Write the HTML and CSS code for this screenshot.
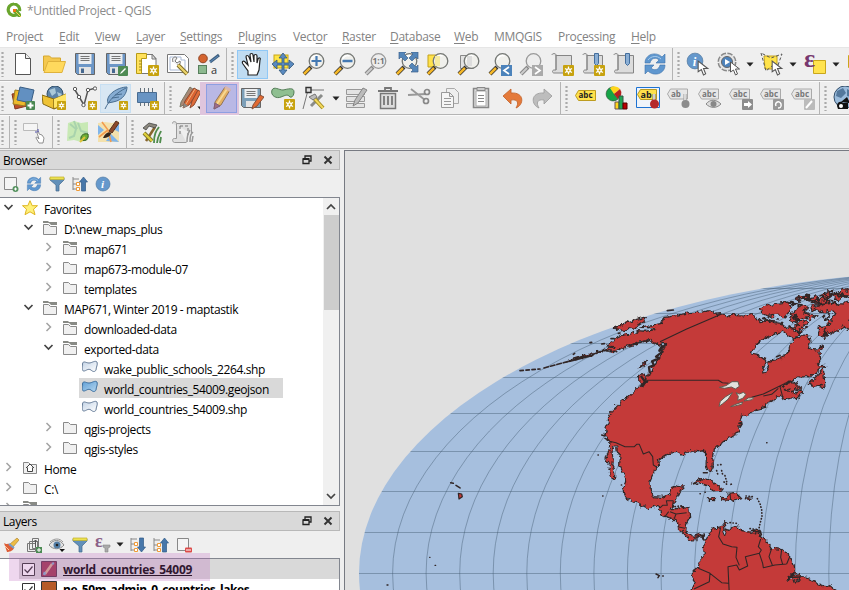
FILE: index.html
```html
<!DOCTYPE html>
<html lang="en">
<head>
<meta charset="utf-8">
<title>*Untitled Project - QGIS</title>
<link rel="stylesheet" href="styles.css">
</head>
<body>
<svg class="defs" width="0" height="0" aria-hidden="true">
<defs>
<linearGradient id="shape" x1="0" y1="0" x2="1" y2="1"><stop offset="0" stop-color="#c3d3e6"/><stop offset="1" stop-color="#fff"/></linearGradient>
<linearGradient id="shapeOn" x1="0" y1="0" x2="1" y2="1"><stop offset="0" stop-color="#5f9fd6"/><stop offset="1" stop-color="#b5d6ef"/></linearGradient>
<symbol id="spark" viewBox="0 0 11 11"><rect width="11" height="11" rx="1" fill="#c7a20e"/><path d="M5.500 1.500v8M2 3.500l7 4M9 3.500l-7 4" stroke="#fff" stroke-width="1.300"/><circle cx="5.500" cy="5.500" r="2.300" fill="#fff"/><circle cx="5.500" cy="5.500" r="1" fill="#c7a20e"/></symbol>
<symbol id="pencil" viewBox="0 0 24 24"><path d="M5 23l1-7L16 1l5 3-9 15z" fill="#e5b062" stroke="#90745a"/><path d="M8 18L18 3" stroke="#f6d891" stroke-width="2"/><path d="M5 23l1-6 5 3z" fill="#a26d85" stroke="#80607c"/><path d="M15 2l2-2 5 3-1 3z" fill="#d9b6ad"/></symbol>
<symbol id="new" viewBox="0 0 24 24"><path d="M4.500 1.500h10l5 5v16h-15z" fill="#fff" stroke="#555"/><path d="M14.500 1.500v5h5" fill="#eee" stroke="#555"/></symbol>
<symbol id="open" viewBox="0 0 24 24"><path d="M1.500 19V4h6l2 2h9v4" fill="#f4c84f" stroke="#d5a72e"/><path d="M2 20.500L6 9.500h17.500L20 20.500z" fill="#ffd95d" stroke="#dfb23c"/></symbol>
<symbol id="save" viewBox="0 0 24 24"><path d="M2.500 1.500h19v21H4.500l-2-2z" fill="#6c96c6" stroke="#666"/><path d="M5.500 2h13v10h-13z" fill="#eceef0"/><path d="M7.500 4.500h9M7.500 6.500h9M7.500 8.500h9" stroke="#777"/><path d="M6 15h12v7H6z" fill="#e3e3e3"/><path d="M8 16.500h3V21H8z" fill="#46688f"/></symbol>
<symbol id="saveas" viewBox="0 0 24 24"><use href="#save"/><rect x="14" y="14" width="10" height="10" rx="1" fill="#4e8b54"/><path d="M16 22l1-2 4-4 1 1-4 4z" fill="#fff"/></symbol>
<symbol id="layout" viewBox="0 0 24 24"><path d="M6 2.500h11l4 4v15H3" fill="#fff" stroke="#777"/><path d="M1.500 1.500h10v5h-5v15h-5z" fill="#ffe15c" stroke="#b79b16"/><path d="M4 9h3M4 12h3M4 15h3M4 18h3" stroke="#9a8421"/><path d="M17 2l4 5h-4z" fill="#ddd" stroke="#777"/><use href="#spark" x="13" y="13" width="11" height="11"/></symbol>
<symbol id="layouts" viewBox="0 0 24 24"><path d="M1.500 2.500h17l4 4v14h-21z" fill="#fff" stroke="#777"/><path d="M4 5h11v3h4v10H4z" fill="none" stroke="#a9b9d5"/><path d="M7 10c-2-5 3-6 4-4L9 9l2 2 3-2c1 3-1 4-3 4" fill="#eee" stroke="#777"/><path d="M12 13l9 9" stroke="#76631f" stroke-width="4"/><path d="M12 13l9 9" stroke="#ead36a" stroke-width="2.400"/></symbol>
<symbol id="style" viewBox="0 0 24 24"><circle cx="6" cy="6.500" r="4.300" fill="#d4642f" stroke="#914323"/><path d="M13 10l9-7" stroke="#41617f" stroke-width="3"/><path d="M13 10l8-6" stroke="#5c8cc0"/><rect x="1.500" y="13.500" width="8" height="8" fill="#8cb98f" stroke="#577f5c"/><text x="14" y="22" font-size="11" font-weight="normal" fill="#333">a</text></symbol>
<symbol id="hand" viewBox="0 0 24 24"><path d="M8 23v-4L3 12c-2-3 1-4 3-1l2 2L6 5c0-2 2-2 3 0l2 5-1-7c0-2 3-2 3 0l1 7V4c0-2 3-2 3 0v7l1-4c1-2 3-1 2 1l-1 10-2 5z" fill="#fff" stroke="#222" stroke-width="1.200"/></symbol>
<symbol id="pansel" viewBox="0 0 24 24"><rect x="3" y="3" width="14" height="13" fill="#ffe545" stroke="#c8a616"/><path d="M12 1l4 5h-3v5h5V8l5 4-5 5v-4h-5v5h3l-4 5-4-5h3v-5H6v4l-5-5 5-4v3h5V6H8z" fill="#5a8ac0" stroke="#345879" stroke-width=".8"/></symbol>
<symbol id="lens" viewBox="0 0 24 24"><path d="M2 22l7-7" stroke="#333" stroke-width="4"/><path d="M2 22l6-6" stroke="#f4b729" stroke-width="2.500"/><circle cx="14.500" cy="9" r="7.300" fill="#f0f0ec" stroke="#747774" stroke-width="1.300"/><path d="M9.500 8a5 5 0 0 1 7-4" stroke="#fff" stroke-width="1.500" fill="none"/></symbol>
<symbol id="lensgray" viewBox="0 0 24 24"><path d="M2 22l7-7" stroke="#888" stroke-width="4"/><path d="M2 22l6-6" stroke="#ccc" stroke-width="2"/><circle cx="14.500" cy="9" r="7.300" fill="#ededed" stroke="#999" stroke-width="1.300"/></symbol>
<symbol id="zin" viewBox="0 0 24 24"><use href="#lens"/><path d="M14.500 4v10M9.500 9h10" stroke="#4479b2" stroke-width="2.200"/></symbol>
<symbol id="zout" viewBox="0 0 24 24"><use href="#lens"/><path d="M9.500 9h10" stroke="#4479b2" stroke-width="2.500"/></symbol>
<symbol id="znative" viewBox="0 0 24 24"><use href="#lensgray"/><text x="8.500" y="12" font-size="8.500" font-weight="bold" fill="#777">1:1</text></symbol>
<symbol id="zfull" viewBox="0 0 24 24"><use href="#lens"/><g fill="#5586b9" stroke="#3d638c" stroke-width=".7"><path d="M4 0h7L9 2l4 4-3 3-4-4-2 2zM23 0h-7l2 2-4 4 3 3 4-4 2 2zM23 20h-7l2-2-4-4 3-3 4 4 2-2z"/></g></symbol>
<symbol id="zsel" viewBox="0 0 24 24"><path d="M2 3h12v12H2z" fill="#ffe24b" stroke="#c3a11d"/><use href="#lens"/><path d="M9 4h5v10H9z" fill="#f5eaa0"/></symbol>
<symbol id="zlayer" viewBox="0 0 24 24"><path d="M3.500 3.500h13v13h-13z" fill="#e2e2e2" stroke="#888"/><use href="#lens"/><path d="M10 4h5v10h-5z" fill="#ddd"/></symbol>
<symbol id="zlast" viewBox="0 0 24 24"><use href="#lens"/><path d="M13 13h11v11H13z" fill="#4c83bb"/><path d="M21 15l-5 3.500 5 3.500" fill="none" stroke="#fff" stroke-width="1.700"/></symbol>
<symbol id="znext" viewBox="0 0 24 24"><use href="#lensgray"/><path d="M13 13h11v11H13z" fill="#aaa"/><path d="M16 15l5 3.500-5 3.500" fill="none" stroke="#fff" stroke-width="1.700"/></symbol>
<symbol id="book" viewBox="0 0 24 24"><path d="M2 3c0-2 4-2 4 0v15H4c-2 0-2 3 0 3h17.500V3.500H6M6 18V3" fill="#dcdcdc" stroke="#858585"/></symbol>
<symbol id="booknew" viewBox="0 0 24 24"><use href="#book"/><use href="#spark" x="13" y="13" width="11" height="11"/></symbol>
<symbol id="bookmark" viewBox="0 0 24 24"><use href="#book"/><path d="M13.500 1.500h4v10l-2 2-2-2z" fill="#8aaed4" stroke="#446e9d"/></symbol>
<symbol id="bookmarknew" viewBox="0 0 24 24"><use href="#bookmark"/><use href="#spark" x="13" y="13" width="11" height="11"/></symbol>
<symbol id="refresh" viewBox="0 0 24 24"><path d="M2 11c0-9 11-12 17-6l3-3v9h-9l3-3c-3-3-8-2-9 3zM22 13c0 9-11 12-17 6l-3 3v-9h9l-3 3c3 3 8 2 9-3z" fill="#5f97cf" stroke="#3c71a9" stroke-width=".6"/><path d="M5 8c3-4 9-5 13-1" stroke="#a6caeb" fill="none"/></symbol>
<symbol id="cursor" viewBox="0 0 12 15"><path d="M1 1v10l3-2 2 5 2-1-2-5h4z" fill="#fff" stroke="#555"/></symbol>
<symbol id="info" viewBox="0 0 24 24"><circle cx="12" cy="12" r="10.500" fill="#6598cc" stroke="#5078a0"/><text x="9" y="18" font-size="17" font-style="italic" font-weight="bold" fill="#fff" font-family="Liberation Serif">i</text></symbol>
<symbol id="identify" viewBox="0 0 24 24"><use href="#info" width="18" height="18"/><use href="#cursor" x="10" y="8" width="15" height="16"/></symbol>
<symbol id="action" viewBox="0 0 24 24"><circle cx="10" cy="10" r="8" fill="#eee" stroke="#888" stroke-width="3" stroke-dasharray="5 1.300"/><circle cx="10" cy="10" r="8" fill="#e4e4e4"/><circle cx="10" cy="10" r="5.500" fill="#4e83bc" stroke="#666"/><path d="M8 7l5 3-5 3z" fill="#fff"/><use href="#cursor" x="12" y="9" width="13" height="15"/></symbol>
<symbol id="select" viewBox="0 0 24 24"><path d="M4 4h13v13H5z" fill="#ffe349" stroke="#c4a31e"/><path d="M1 1l5 18 6-5 5 2 5-14-11 4z" fill="none" stroke="#555" stroke-dasharray="3 2"/><use href="#cursor" x="10" y="8" width="15" height="16"/></symbol>
<symbol id="exprsel" viewBox="0 0 24 24"><path d="M10.500 8.500h12v13h-12z" fill="#ffe34e" stroke="#c9a61b"/><text x="1" y="15" font-size="26" font-weight="bold" fill="#77376f" font-family="Liberation Serif">ε</text></symbol>
<symbol id="yellow" viewBox="0 0 24 24"><path d="M2.500 3.500h20v12h-20z" fill="#ffe34e" stroke="#c9a61b"/></symbol>
<symbol id="datasource" viewBox="0 0 24 24"><path d="M1 8l12-2 3 14-12 3z" fill="#bf4e27" stroke="#82371f"/><path d="M4 4l12 2-2 14L2 18z" fill="#edba2b" stroke="#9a7a25"/><path d="M9 1l14 3-3 13-14-3z" fill="#6290c1" stroke="#385d84"/><rect x="15" y="15" width="9" height="9" rx="1" fill="#498751"/><path d="M19.500 16.500v6M16.500 19.500h6" stroke="#fff" stroke-width="2"/></symbol>
<symbol id="geopackage" viewBox="0 0 24 24"><circle cx="13" cy="8" r="8" fill="#5c83a8" stroke="#32506a"/><path d="M7 4l6-2 1 5-4 3zM15 6l5 2-3 4z" fill="#aac8d8"/><path d="M0 9l12 4v10L1 18zM12 13l12-5v10l-12 5z" fill="#efc335" stroke="#886c16"/><path d="M12 13l12-5v8l-12 6z" fill="#ffe567"/><use href="#spark" x="15" y="15" width="9" height="9"/></symbol>
<symbol id="shapefile" viewBox="0 0 24 24"><path d="M2 4l9 15 4-15 8-2" fill="none" stroke="#555" stroke-width="1.500"/><g fill="#fff" stroke="#555"><circle cx="2" cy="3" r="1.700"/><circle cx="6" cy="11" r="1.700"/><circle cx="10.500" cy="19" r="1.700"/><circle cx="15" cy="4" r="1.700"/><circle cx="22" cy="2.500" r="1.700"/></g><use href="#spark" x="15" y="15" width="9" height="9"/></symbol>
<symbol id="feather" viewBox="0 0 24 24"><path d="M4 17C1 9 14 1 23 1c0 5-3 13-14 15z" fill="#86acd2" stroke="#496e91"/><path d="M1 23C5 14 12 7 22 2M8 12l7-1M11 9l7-1" fill="none" stroke="#496e91"/><use href="#spark" x="15" y="15" width="9" height="9"/></symbol>
<symbol id="chip" viewBox="0 0 24 24"><path d="M5.500 2v18M9.500 2v18M13.500 2v18M17.500 2v18" stroke="#63717d"/><path d="M2.500 6.500h19v10h-19z" fill="#6894c3" stroke="#496c92"/><use href="#spark" x="15" y="15" width="9" height="9"/></symbol>
<symbol id="edits" viewBox="0 0 24 24"><path d="M2 21l1-5L12 1l4 3-9 14z" fill="#a88875" stroke="#776"/><path d="M5 22l2-7 9-13 5 3-10 14z" fill="#db6532" stroke="#8b4a30"/><path d="M12 22l2-7 6-11 3 2-7 13z" fill="#df6d3a" stroke="#8b4a30"/><path d="M17 3l-9 15" stroke="#f2af7b"/><path d="M5 22l1-5 4 3z" fill="#8a8884"/></symbol>
<symbol id="savedits" viewBox="0 0 24 24"><path d="M1.500 2.500h19v19H3.500l-2-2z" fill="#7c9fb8" stroke="#666"/><path d="M4.500 3h13v9h-13z" fill="#eceef0"/><path d="M6.500 5.500h9M6.500 7.500h9M6.500 9.500h9" stroke="#777"/><path d="M6 15h9v6H6z" fill="#e3e3e3"/><path d="M12 23l1-4 7-10 4 2-7 9z" fill="#e16a32" stroke="#87513b"/></symbol>
<symbol id="addpoly" viewBox="0 0 24 24"><path d="M1 4c2-4 7 0 11 0 5-1 11-3 11 2 0 4-3 7-5 4-2-2-5 0-8 1-4 2-11-1-9-7z" fill="#8fbf91" stroke="#547d58"/><use href="#spark" x="13" y="13" width="11" height="11"/></symbol>
<symbol id="vertex" viewBox="0 0 24 24"><path d="M1 23L6 4h16" fill="none" stroke="#777"/><path d="M4 1.500h5v5H4z" fill="#ddd" stroke="#333" stroke-width="1.400"/><path d="M9 20L20 9" stroke="#8a8c89" stroke-width="3"/><path d="M10 10l11 12" stroke="#a18c22" stroke-width="4"/><path d="M10 10l11 12" stroke="#f3d85c" stroke-width="2"/><path d="M7 11l6-3 2 3-4 3z" fill="#bbb" stroke="#777"/></symbol>
<symbol id="attributes" viewBox="0 0 24 24"><path d="M1.500 3.500h18v5h-18zM1.500 10.500h18v5h-18zM1.500 17.500h18v4h-18z" fill="#e3e3e3" stroke="#999"/><path d="M8 20l2-6 8-12 4 2-9 13z" fill="#bbb" stroke="#858585"/></symbol>
<symbol id="trash" viewBox="0 0 24 24"><path d="M4.500 7.500h15v15h-15z" fill="#ddd" stroke="#777" stroke-width="1.500"/><path d="M2 5h20M9 4V2h6v2M8 10v9M12 10v9M16 10v9" fill="none" stroke="#777" stroke-width="1.800"/></symbol>
<symbol id="cut" viewBox="0 0 24 24"><path d="M1 9l18-1M4 3l14 11" stroke="#999" stroke-width="1.800"/><circle cx="20" cy="6" r="2.500" fill="none" stroke="#888" stroke-width="1.700"/><circle cx="19" cy="15" r="2.500" fill="none" stroke="#888" stroke-width="1.700"/></symbol>
<symbol id="copy" viewBox="0 0 24 24"><path d="M8.500 2.500h8l4 4v11h-12z" fill="#eee" stroke="#aaa"/><path d="M3.500 6.500h8l4 4v11h-12zM11.500 6.500v4h4M6 12.500h7M6 15.500h7M6 18.500h7" fill="#f5f5f5" stroke="#999"/></symbol>
<symbol id="paste" viewBox="0 0 24 24"><path d="M4.500 2.500h15v19h-15z" fill="#ddd" stroke="#888" stroke-width="1.500"/><path d="M7 5h10v15H7z" fill="#fff" stroke="#aaa"/><path d="M8 1.500h8v3H8zM9 9.500h6M9 12.500h6M9 15.500h6" fill="#ccc" stroke="#888"/></symbol>
<symbol id="undo" viewBox="0 0 24 24"><path d="M3 10l8-7v4c14-1 13 12 5 15 3-5 2-9-5-8v4z" fill="#e47a3b" stroke="#c25e25" stroke-width=".8"/></symbol>
<symbol id="redo" viewBox="0 0 24 24"><path d="M21 10l-8-7v4C-1 6 0 19 8 22c-3-5-2-9 5-8v4z" fill="#bdbdbd" stroke="#999" stroke-width=".8"/></symbol>
<symbol id="label" viewBox="0 0 24 24"><path d="M1.500 9.500l3-5h17v10h-17z" fill="#ffe14b" stroke="#bd9c20"/><text x="4.500" y="12.300" font-size="8" font-weight="bold" fill="#222">abc</text></symbol>
<symbol id="labelgray" viewBox="0 0 24 24"><path d="M.5 8l3-5h17v10h-17z" fill="#e7e7e7" stroke="#aaa"/><text x="4" y="10.600" font-size="8" font-weight="bold" fill="#777">abc</text></symbol>
<symbol id="diagram" viewBox="0 0 24 24"><path d="M9 8V1a7 7 0 1 0 4 12z" fill="#16a447" stroke="#2c442e" stroke-width=".6"/><path d="M9 8L5 2a7 7 0 0 1 10 1z" fill="#ffd51b"/><path d="M9 8l6-5a7 7 0 0 1-2 10z" fill="#b72220"/><path d="M10 16h4v7h-4z" fill="#ffd51b" stroke="#655"/><path d="M14 10h4v13h-4z" fill="#20a654" stroke="#354"/><path d="M18 17h4v6h-4z" fill="#b00" stroke="#500"/></symbol>
<symbol id="labelpin" viewBox="0 0 24 24"><path d="M.5 1.500h23v20H.5z" fill="#eff4fa" stroke="#1d72d2"/><path d="M1.500 8.500l3-5h16v10h-16z" fill="#ffe14b" stroke="#b99920"/><text x="4.500" y="11.500" font-size="9" font-weight="bold" fill="#222">ab</text><path d="M18 8v9" stroke="#777" stroke-width="3"/><path d="M18 8v9" stroke="#eee" stroke-width="1.500"/><circle cx="18.500" cy="18" r="4.500" fill="#b6282b"/></symbol>
<symbol id="labelunpin" viewBox="0 0 24 24"><path d="M.5 8l3-5h17v10h-17z" fill="#e7e7e7" stroke="#aaa"/><text x="4" y="10.600" font-size="8" font-weight="bold" fill="#777">ab</text><path d="M18 8v9" stroke="#999" stroke-width="3"/><path d="M18 8v9" stroke="#eee" stroke-width="1.500"/><circle cx="18.500" cy="18" r="4" fill="#8c8c8c"/></symbol>
<symbol id="labeleye" viewBox="0 0 24 24"><use href="#labelgray"/><path d="M8 18c4-5 10-5 15 0-5 5-11 4-15 0z" fill="#ddd" stroke="#888"/><circle cx="15.500" cy="18" r="3" fill="#888"/></symbol>
<symbol id="labelmove" viewBox="0 0 24 24"><use href="#labelgray"/><rect x="13" y="13" width="11" height="11" rx="1" fill="#8d8d8d"/><path d="M15 17h4v-2l4 3.500-4 3.500v-2h-4z" fill="#fff"/></symbol>
<symbol id="labelrotate" viewBox="0 0 24 24"><use href="#labelgray"/><rect x="13" y="13" width="11" height="11" rx="1" fill="#999"/><path d="M16 20c-2-4 4-6 5-2s-2 4-3 4" fill="none" stroke="#fff" stroke-width="1.500"/></symbol>
<symbol id="labeledit" viewBox="0 0 24 24"><use href="#labelgray"/><rect x="13" y="13" width="11" height="11" rx="1" fill="#bbb"/><path d="M15 22l6-7" stroke="#fff" stroke-width="2"/></symbol>
<symbol id="globe" viewBox="0 0 24 24"><circle cx="12" cy="11" r="11" fill="#9bbcdc" stroke="#344f6b"/><path d="M4 5l6-3 3 5-5 5-5-2zM14 3l6 3-2 5-4-1z" fill="#54789c"/><path d="M4 20c0-5 5-5 6-3h5v6H5z" fill="#111"/><path d="M8 16l6-5 3 6z" fill="#111"/><circle cx="8" cy="20" r="2" fill="#fff"/></symbol>
<symbol id="rectsel" viewBox="0 0 24 24"><path d="M1.500 3.500h14v7h-14z" fill="#f5f5f5" stroke="#bbb"/><path d="M16 12v-3M13 12h4" stroke="#4b4aa4"/><path d="M15 13c1-2 2-1 2 1l3 1 2 3-1 5h-4l-3-5c0-2 2 0 3 1z" fill="#fff" stroke="#777" stroke-width=".8"/></symbol>
<symbol id="osm" viewBox="0 0 24 24"><path d="M2 3l6-2 7 2 7-1v18l-7 2-7-2-7 1z" fill="#c8e9b5"/><path d="M4 4l6 5-2 7-5 2M12 3l3 8 7 2M8 1l3 8" fill="none" stroke="#a9d3ad" stroke-width="2"/><path d="M15 20c-1-5 3-7 7-6 1 4-1 8-7 6z" fill="#6dae36" stroke="#315e24"/><path d="M14 22l5-5" stroke="#dec23a" stroke-width="2"/></symbol>
<symbol id="maptool" viewBox="0 0 24 24"><path d="M1 3l7-1 7 1 7-2v21H1z" fill="#f3e1ad"/><path d="M1 5l6 5-6 5zM9 21l5-7 8 8zM14 8l8-4v8z" fill="#80b5ea"/><path d="M5 2l6 8 3 12M2 17l9-7" stroke="#f39b4c" stroke-width="1.600" fill="none"/><path d="M12 11l7-10 3 2-7 10z" fill="#8c4928" stroke="#57301f"/><path d="M6 18c2-5 6-7 8-5 0 3-4 5-8 5z" fill="#33251c"/></symbol>
<symbol id="hammer" viewBox="0 0 24 24"><path d="M14 23c0-9 2-12 5-16M17 23c1-8 3-9 4-12M20 23l1-6" stroke="#4f8c4d" stroke-width="1.800" fill="none"/><path d="M6 21L15 7" stroke="#87652c" stroke-width="2.500"/><path d="M3 8l6-5 8 2-2 3-6-2-3 4z" fill="#8c887d" stroke="#444" stroke-width=".8"/><path d="M4 13l8 8" stroke="#77702a" stroke-width="4"/><path d="M4 13l8 8" stroke="#dfcf3a" stroke-width="2.400"/></symbol>
<symbol id="scroll" viewBox="0 0 24 24"><path d="M1.500 3.500c0-3 4-2 4 0h15v10M5.500 3.500v15h-2c-3 0-2 4 0 4h12" fill="#e0e0e0" stroke="#999"/><path d="M9 6v10M9 6h8v9" stroke="#777" fill="none" stroke-dasharray="3 2"/><path d="M16 22c0-7 1-9 3-12M19 22c0-7 1-8 3-10M21 22l1-6" stroke="#999" fill="none" stroke-width="1.500"/></symbol>
<symbol id="folder" viewBox="0 0 16 16"><path d="M1.500 2.500h5l2 2h6v9h-13z" fill="#f0f0f0" stroke="#898989"/></symbol>
<symbol id="folders" viewBox="0 0 16 16"><path d="M1 1h5l1 1h8v3H9L7 3H1z" fill="#888a85"/><path d="M1.500 4.500h5l2 2h6v8h-13z" fill="#f0f0f0" stroke="#898989"/></symbol>
<symbol id="home" viewBox="0 0 16 16"><use href="#folder"/><path d="M4 8l4-4 4 4M5.500 7.500v4h5v-4" fill="#fff" stroke="#444"/></symbol>
<symbol id="star" viewBox="0 0 16 16"><path d="M8 .7l2.200 5H15.500l-4 3.500 1.500 5.500L8 11.800 3 14.700l1.500-5.500-4-3.500h5.300z" fill="#fff17a" stroke="#dfb51f"/></symbol>
<symbol id="geom" viewBox="0 0 16 16"><path d="M.5 4C1 0 4 3 7 3s6-3 8-1c1 3-1 5-1 8-1 2-3 2-5 0-3-2-5 1-7 1-3 0-1-4-1.500-7z" fill="url(#shape)" stroke="#667c98"/></symbol>
<symbol id="geomon" viewBox="0 0 16 16"><path d="M.5 4C1 0 4 3 7 3s6-3 8-1c1 3-1 5-1 8-1 2-3 2-5 0-3-2-5 1-7 1-3 0-1-4-1.500-7z" fill="url(#shapeOn)" stroke="#3c6f9f"/></symbol>
<symbol id="right" viewBox="0 0 10 10"><path d="M3 1l4 4-4 4" fill="none" stroke="#a2a2a2" stroke-width="1.500"/></symbol>
<symbol id="down" viewBox="0 0 10 10"><path d="M1 3l4 4 4-4" fill="none" stroke="#444" stroke-width="1.700"/></symbol>
<symbol id="drop" viewBox="0 0 8 5"><path d="M.5.500h7L4 4.500z" fill="#222"/></symbol>
<symbol id="addlayer" viewBox="0 0 16 16"><path d="M1.500 1.500h12v12h-12z" fill="#f4f4f4" stroke="#888"/><circle cx="12.500" cy="13" r="3" fill="#579361"/><path d="M12.500 11.500v3M11 13h3" stroke="#fff"/></symbol>
<symbol id="remove" viewBox="0 0 16 16"><path d="M1.500 1.500h11v12h-11z" fill="#f4f4f4" stroke="#888"/><rect x="9" y="10.500" width="7" height="5" rx="1" fill="#dc4a49"/><path d="M10 13h5" stroke="#fff"/></symbol>
<symbol id="filter" viewBox="0 0 16 16"><path d="M1 2h14v2L10 9v6H7V9L1 4z" fill="#6290b9" stroke="#42698e" stroke-width=".7"/><path d="M1 1h14v2.500H1z" fill="#ece251" stroke="#c3b02a" stroke-width=".7"/></symbol>
<symbol id="collapse" viewBox="0 0 16 16"><path d="M1 1v13M1 3h6M1 8h4M1 13h4" stroke="#888" fill="none"/><path d="M4.500 6.500h3v3h-3zM4.500 11.500h3v3h-3z" fill="#fff" stroke="#ef9b39"/><path d="M11.500 1l4 5h-2v9H9.500V6h-2z" fill="#4777aa" stroke="#315a86" stroke-width=".7"/></symbol>
<symbol id="expand" viewBox="0 0 16 16"><path d="M1 1v13M1 2h6M1 7h4M1 13h4" stroke="#888" fill="none"/><path d="M4.500 5.500h3v3h-3zM4.500 11.500h3v3h-3z" fill="#fff" stroke="#ef9b39"/><path d="M11.500 15l4-5h-2V1H9.500v9h-2z" fill="#4777aa" stroke="#315a86" stroke-width=".7"/></symbol>
<symbol id="brush" viewBox="0 0 16 16"><path d="M7 7l7-6 2 2-6 7z" fill="#edbc45" stroke="#a67c25" stroke-width=".6"/><path d="M1 6c3 2 5 0 6 1l4 4c-1 3-5 4-7 4z" fill="#dd5e37"/><path d="M2 9l4 4" stroke="#ffc79c"/><path d="M6 7l5 4" stroke="#769dcb" stroke-width="2"/></symbol>
<symbol id="group" viewBox="0 0 16 16"><path d="M1.500 6.500h8v8h-8zM3.500 4.500h8v8h-8zM6.500 1.500h6v10h-6z" fill="#eee" stroke="#777"/><path d="M9.500 10V3M7.500 5l2-2 2 2" fill="none" stroke="#555"/><rect x="10" y="10" width="6" height="6" fill="#4c8a54"/><path d="M13 11v4M11 13h4" stroke="#fff"/></symbol>
<symbol id="eye" viewBox="0 0 16 16"><path d="M0 8c4-6 11-6 15 0-4 5-11 5-15 0z" fill="#e3e3e3" stroke="#888"/><path d="M1 5c4-4 10-4 13 0" fill="none" stroke="#999"/><circle cx="8" cy="8" r="3.500" fill="#537da5"/><circle cx="8" cy="8" r="1.300" fill="#222"/><path d="M10.500 12h5.500l-3 3z" fill="#111"/></symbol>
<symbol id="exprfilter" viewBox="0 0 16 16"><text x="0" y="10" font-size="18" font-weight="bold" fill="#8b6288" font-family="Liberation Serif">ε</text><path d="M8 8h7v2l-2 1v4h-3v-4l-2-1z" fill="#aaa" stroke="#888" stroke-width=".6"/></symbol>
<symbol id="float" viewBox="0 0 10 10"><path d="M3 3V1h6v5H7" fill="none" stroke="#222" stroke-width="1.300"/><path d="M1 4h6v4.500H1z" fill="none" stroke="#222" stroke-width="1.300"/><path d="M1 4h6" stroke="#222" stroke-width="2"/></symbol>
<symbol id="close" viewBox="0 0 10 10"><path d="M1.500 1.500l7 7M8.500 1.500l-7 7" stroke="#333" stroke-width="1.900"/></symbol>
</defs>
</svg>

<div class="app">
<header class="titlebar">
<svg class="logo" viewBox="0 0 16 16"><path d="M8 2a5.700 5.700 0 1 0 3 10.500M8 2a5.700 5.700 0 0 1 5.500 7" fill="none" stroke="#6aa52d" stroke-width="3.200"/><path d="M7 7h4l4 5v3h-3L7 10z" fill="#6aa52d"/><path d="M7 7h3v3H7z" fill="#ee7913"/><path d="M10 10l5 5" stroke="#f2d34b"/></svg>
<span>*Untitled Project - QGIS</span>
</header>
<nav class="menu"><span>Pro<u>j</u>ect</span><span><u>E</u>dit</span><span><u>V</u>iew</span><span><u>L</u>ayer</span><span><u>S</u>ettings</span><span><u>P</u>lugins</span><span>Vect<u>o</u>r</span><span><u>R</u>aster</span><span><u>D</u>atabase</span><span><u>W</u>eb</span><span>MMQGIS</span><span>Pro<u>c</u>essing</span><span><u>H</u>elp</span></nav>

<div class="toolrow">
<div class="group first"><i class="handle"></i>
<b class="tool"><svg><use href="#new"/></svg></b><b class="tool"><svg><use href="#open"/></svg></b><b class="tool"><svg><use href="#save"/></svg></b><b class="tool"><svg><use href="#saveas"/></svg></b><b class="tool"><svg><use href="#layout"/></svg></b><b class="tool"><svg><use href="#layouts"/></svg></b><b class="tool"><svg><use href="#style"/></svg></b></div>
<div class="group"><i class="handle"></i>
<b class="tool active"><svg><use href="#hand"/></svg></b><b class="tool"><svg><use href="#pansel"/></svg></b><b class="tool"><svg><use href="#zin"/></svg></b><b class="tool"><svg><use href="#zout"/></svg></b><b class="tool"><svg><use href="#znative"/></svg></b><b class="tool"><svg><use href="#zfull"/></svg></b><b class="tool"><svg><use href="#zsel"/></svg></b><b class="tool"><svg><use href="#zlayer"/></svg></b><b class="tool"><svg><use href="#zlast"/></svg></b><b class="tool"><svg><use href="#znext"/></svg></b><b class="tool"><svg><use href="#booknew"/></svg></b><b class="tool"><svg><use href="#bookmarknew"/></svg></b><b class="tool"><svg><use href="#bookmark"/></svg></b><b class="tool"><svg><use href="#refresh"/></svg></b></div>
<div class="group last"><i class="handle"></i>
<b class="tool"><svg><use href="#identify"/></svg></b><b class="tool"><svg><use href="#action"/></svg></b><svg class="drop"><use href="#drop"/></svg><b class="tool"><svg><use href="#select"/></svg></b><svg class="drop"><use href="#drop"/></svg><b class="tool"><svg><use href="#exprsel"/></svg></b><svg class="drop"><use href="#drop"/></svg><b class="tool"><svg><use href="#yellow"/></svg></b></div>
</div>

<div class="toolrow">
<div class="group first"><i class="handle"></i>
<b class="tool"><svg><use href="#datasource"/></svg></b><b class="tool"><svg><use href="#geopackage"/></svg></b><b class="tool"><svg><use href="#shapefile"/></svg></b><b class="tool hover"><svg><use href="#feather"/></svg></b><b class="tool"><svg><use href="#chip"/></svg></b></div>
<div class="group"><i class="handle"></i>
<b class="tool"><svg><use href="#edits"/></svg><svg class="corner"><use href="#drop"/></svg></b><b class="tool editing"><svg><use href="#pencil"/></svg></b><b class="tool"><svg><use href="#savedits"/></svg></b><b class="tool"><svg><use href="#addpoly"/></svg></b><b class="tool"><svg><use href="#vertex"/></svg></b><svg class="drop"><use href="#drop"/></svg><b class="tool"><svg><use href="#attributes"/></svg></b><b class="tool"><svg><use href="#trash"/></svg></b><b class="tool"><svg><use href="#cut"/></svg></b><b class="tool"><svg><use href="#copy"/></svg></b><b class="tool"><svg><use href="#paste"/></svg></b><b class="tool"><svg><use href="#undo"/></svg></b><b class="tool"><svg><use href="#redo"/></svg></b></div>
<div class="group"><i class="handle"></i>
<b class="tool"><svg><use href="#label"/></svg></b><b class="tool"><svg><use href="#diagram"/></svg></b><b class="tool"><svg><use href="#labelpin"/></svg></b><b class="tool"><svg><use href="#labelunpin"/></svg></b><b class="tool"><svg><use href="#labeleye"/></svg></b><b class="tool"><svg><use href="#labelmove"/></svg></b><b class="tool"><svg><use href="#labelrotate"/></svg></b><b class="tool"><svg><use href="#labeledit"/></svg></b></div>
<div class="group last"><i class="handle"></i><b class="tool"><svg><use href="#globe"/></svg></b></div>
</div>

<div class="toolrow">
<div class="group first"><i class="handle"></i></div>
<div class="group snug"><i class="handle"></i><b class="tool"><svg><use href="#rectsel"/></svg></b></div>
<div class="group"><i class="handle"></i><b class="tool"><svg><use href="#osm"/></svg></b><b class="tool"><svg><use href="#maptool"/></svg></b></div>
<div class="group last"><i class="handle"></i><b class="tool"><svg><use href="#hammer"/></svg></b><b class="tool"><svg><use href="#scroll"/></svg></b></div>
</div>

<main class="work">
<aside class="docks">
<section class="dock browser">
<h2 class="docktitle"><span>Browser</span><svg><use href="#float"/></svg><svg><use href="#close"/></svg></h2>
<div class="docktools"><svg><use href="#addlayer"/></svg><svg><use href="#refresh"/></svg><svg><use href="#filter"/></svg><svg><use href="#collapse"/></svg><svg><use href="#info"/></svg></div>
<div class="treebox">
<ul class="tree">
<li><svg class="arrow"><use href="#down"/></svg><svg class="ico"><use href="#star"/></svg><span>Favorites</span></li>
<li class="l1"><svg class="arrow"><use href="#down"/></svg><svg class="ico"><use href="#folders"/></svg><span>D:\new_maps_plus</span></li>
<li class="l2"><svg class="arrow"><use href="#right"/></svg><svg class="ico"><use href="#folders"/></svg><span>map671</span></li>
<li class="l2"><svg class="arrow"><use href="#right"/></svg><svg class="ico"><use href="#folder"/></svg><span>map673-module-07</span></li>
<li class="l2"><svg class="arrow"><use href="#right"/></svg><svg class="ico"><use href="#folder"/></svg><span>templates</span></li>
<li class="l1"><svg class="arrow"><use href="#down"/></svg><svg class="ico"><use href="#folders"/></svg><span>MAP671, Winter 2019 - maptastik</span></li>
<li class="l2"><svg class="arrow"><use href="#right"/></svg><svg class="ico"><use href="#folders"/></svg><span>downloaded-data</span></li>
<li class="l2"><svg class="arrow"><use href="#down"/></svg><svg class="ico"><use href="#folders"/></svg><span>exported-data</span></li>
<li class="l3"><svg class="ico"><use href="#geom"/></svg><span>wake_public_schools_2264.shp</span></li>
<li class="l3 picked"><svg class="ico"><use href="#geomon"/></svg><span>world_countries_54009.geojson</span></li>
<li class="l3"><svg class="ico"><use href="#geom"/></svg><span>world_countries_54009.shp</span></li>
<li class="l2"><svg class="arrow"><use href="#right"/></svg><svg class="ico"><use href="#folder"/></svg><span>qgis-projects</span></li>
<li class="l2"><svg class="arrow"><use href="#right"/></svg><svg class="ico"><use href="#folder"/></svg><span>qgis-styles</span></li>
<li><svg class="arrow"><use href="#right"/></svg><svg class="ico"><use href="#home"/></svg><span>Home</span></li>
<li><svg class="arrow"><use href="#right"/></svg><svg class="ico"><use href="#folder"/></svg><span>C:\</span></li>
<li><svg class="arrow"><use href="#right"/></svg><svg class="ico"><use href="#folders"/></svg><span>D:\</span></li>
</ul>
<div class="scroll"><svg class="up"><use href="#down"/></svg><i class="thumb"></i><svg><use href="#down"/></svg></div>
</div>
</section>
<section class="dock layers">
<h2 class="docktitle"><span>Layers</span><svg><use href="#float"/></svg><svg><use href="#close"/></svg></h2>
<div class="docktools"><svg><use href="#brush"/></svg><svg><use href="#group"/></svg><svg><use href="#eye"/></svg><svg><use href="#filter"/></svg><svg><use href="#exprfilter"/></svg><svg class="small"><use href="#drop"/></svg><svg><use href="#expand"/></svg><svg><use href="#collapse"/></svg><svg><use href="#remove"/></svg></div>
<div class="layerbox">
<div class="layer current"><svg class="check" viewBox="0 0 13 13"><path d="M.5.500h12v12H.5z" fill="#fff" stroke="#333"/><path d="M2.500 6.500l3 3 5-6" fill="none" stroke="#333" stroke-width="1.200"/></svg><svg class="swatch" viewBox="0 0 16 16"><path d="M.5.500h15v15H.5z" fill="#9e3850" stroke="#5d3148"/><path d="M4 13l7-10" stroke="#d7ad91" stroke-width="2.500"/><path d="M3 14l1-3M11 3l2-1" stroke="#83abc9" stroke-width="2.500"/></svg><span>world_countries_54009</span></div>
<div class="layer"><svg class="check" viewBox="0 0 13 13"><path d="M.5.500h12v12H.5z" fill="#fff" stroke="#333"/><path d="M2.500 6.500l3 3 5-6" fill="none" stroke="#333" stroke-width="1.200"/></svg><svg class="swatch" viewBox="0 0 16 16"><path d="M.5.500h15v15H.5z" fill="#b65a28" stroke="#333"/></svg><span>ne_50m_admin_0_countries_lakes</span></div>
<i class="marker"></i>
</div>
</section>
</aside>

<div class="canvas">
<svg viewBox="345 151 504 439" width="504" height="439">
<defs><clipPath id="world"><ellipse cx="963" cy="573.300" rx="604" ry="302"/></clipPath>
<filter id="coast" filterUnits="userSpaceOnUse" x="-100" y="20" width="900" height="960" color-interpolation-filters="sRGB"><feTurbulence type="fractalNoise" baseFrequency=".075" numOctaves="2" seed="4"/><feDisplacementMap in="SourceGraphic" scale="18" xChannelSelector="R" yChannelSelector="G"/></filter>
<filter id="fjords" filterUnits="userSpaceOnUse" x="-100" y="20" width="900" height="960" color-interpolation-filters="sRGB"><feTurbulence type="fractalNoise" baseFrequency=".065" numOctaves="2" seed="9"/><feDisplacementMap in="SourceGraphic" scale="26" xChannelSelector="R" yChannelSelector="G"/></filter></defs>
<ellipse cx="963" cy="573.300" rx="604" ry="302" fill="#a6bfde"/>
<g clip-path="url(#world)" fill="none" stroke="#3d566b" stroke-opacity=".42" stroke-width="1">
<path d="M345 573.500H849M345 532.500H849M345 491.500H849M345 451.500H849M345 413.500H849M345 377.500H849M345 343.500H849M345 313.500H849M345 288.500H849"/>
<ellipse cx="963" cy="573.300" rx="570.400" ry="302"/><ellipse cx="963" cy="573.300" rx="536.900" ry="302"/><ellipse cx="963" cy="573.300" rx="503.300" ry="302"/><ellipse cx="963" cy="573.300" rx="469.800" ry="302"/><ellipse cx="963" cy="573.300" rx="436.200" ry="302"/><ellipse cx="963" cy="573.300" rx="402.700" ry="302"/><ellipse cx="963" cy="573.300" rx="369.100" ry="302"/><ellipse cx="963" cy="573.300" rx="335.600" ry="302"/><ellipse cx="963" cy="573.300" rx="302" ry="302"/><ellipse cx="963" cy="573.300" rx="268.400" ry="302"/><ellipse cx="963" cy="573.300" rx="234.900" ry="302"/><ellipse cx="963" cy="573.300" rx="201.300" ry="302"/><ellipse cx="963" cy="573.300" rx="167.800" ry="302"/><ellipse cx="963" cy="573.300" rx="134.200" ry="302"/>
</g>
<g transform="translate(590 270) scale(.33333)" fill="#c43a39" stroke="#312626" stroke-width="3.600" stroke-linejoin="round">
<g filter="url(#coast)">
<path d="M-70 273L-40 266 0 258 22 248 40 240 75 245 88 236 100 238 104 230 130 225 148 216 165 215 180 208 187 216 198 220 210 226 222 220 232 222 226 235 216 240 214 254 205 268 196 284 184 290 188 304 176 306 170 320 172 331 158 350 148 348 135 362 110 385 92 398 80 410 62 428 56 440 55 455 48 470 47 490 44 498 55 508 60 516 57 540 50 560 46 575 57 580 58 596 55 604 66 625 74 627 74 612 68 590 70 570 66 545 70 528 80 528 82 545 90 560 86 580 98 605 106 625 107 635 98 655 103 678 125 692 140 700 175 717 194 708 208 713 212 735 235 742 255 752 264 762 262 775 275 783 290 800 305 813 318 812 318 802 334 797 345 812 340 830 343 858 328 875 325 890 308 910 306 920 316 935 312 950 303 960 303 975 760 975 735 960 720 947 705 950 690 944 666 933 650 922 635 920 625 935 610 936 603 930 590 927 602 918 616 905 612 885 600 858 575 838 545 835 538 824 522 807 508 800 512 785 500 780 485 787 455 782 445 772 430 768 420 778 405 775 402 788 398 776 412 760 405 757 395 770 370 775 360 790 352 805 348 808 330 792 312 799 298 792 287 785 290 760 299 745 297 716 280 712 270 716 258 712 245 722 240 718 252 700 260 687 270 665 283 648 265 646 248 652 240 673 215 682 190 680 181 660 180 635 190 612 202 593 205 572 220 560 235 551 260 547 275 555 290 546 300 549 305 542 325 545 340 542 350 550 348 585 353 600 362 602 370 585 368 560 370 540 395 518 430 495 446 488 447 470 458 455 450 448 455 438 475 432 495 420 512 415 530 412 526 402 550 390 560 383 570 375 580 390 600 385 620 382 637 370 630 364 610 370 605 362 620 352 605 345 590 349 575 350 585 340 605 332 620 321 650 320 680 310 690 290 707 292 706 283 680 285 692 270 690 245 697 225 680 240 665 238 655 235 663 215 660 200 640 195 625 205 615 206 600 225 597 240 580 260 555 270 540 272 533 275 536 290 525 308 515 309 522 288 530 270 510 262 505 254 484 249 493 233 500 222 520 205 545 195 560 188 580 185 600 200 615 205 630 192 608 180 600 170 585 172 575 160 555 158 535 150 510 155 500 142 480 132 460 138 440 137 430 132 410 139 395 131 378 133 370 125 355 122 340 126 300 128 265 135 240 140 222 142 215 160 200 163 175 165 150 172 180 173 195 178 165 184 145 182 125 192 100 195 80 203 70 215 50 228 72 230 45 238z"/>
<path d="M70 175l45-20 55-15-8 12-15 10-10 16-22-5-12 9-14-4zM145 315l10-5 10 7 3 13-8 18-13-8zM145 298l16-20 8-7-6 15zM305 642l28-16 24 3 21 14 22 17-28 3-12-13-24-9-18-4zM355 687l16-3 3 8-16-1zM395 682l18 2-2-14 25-2 16 15-20 6-15 2-22-3zM463 683l20 2-4 4-15-2zM608 913l22-2 1 14-14 10-12-8z"/>
<path d="M653 343l27-25 20-22 3 26 2 32-17-8-15 3zM578 345l26-10 18 6-5 7 20 1-13 12-12-2-24 5z"/>
</g>
<g filter="url(#fjords)">
<path d="M512 120l25-16 50-8 15 12-4 20-12 13-20-6-28 4-22-12zM605 135l20-25 18-6 13 10-17 8 20 5-5 13-24 5-15 12-17-6zM620 85l18-8 22 3 15-6 8 9-18 8-22-4-20 7zM668 95l22-7 30-3-15 12-28 8zM690 76l35-13-6 12 12 4-30 6zM728 82l14-17 18-7 25 5v17l-25-4-14 13zM610 172l20-20 14-2 8 10-17 10 14 4-22 13zM648 140l22-12 8 9-21 16zM660 115l35-12 25-10 20 5 45 2v52l-8 4 2 10-10 12-9-8-15 8 4 10-17-4-10 10-5-10-5 5-10 15-17-12 4-22 21-4 18-20 5-16-8-9-18 8-16-5z"/>
<path d="M622 88l32-2 6 6 28-6M640 75l20 12M700 72l22 5 12-8 48 18M735 68l42 14M510 145l25 7 25-2M595 172l22 4 10-12M610 135l17 18M640 120l14 14M700 178l8 14-12 7M720 132l-15 14 14 8M725 98l20 3M600 98l32 8M620 180l10 8M665 100l55-3" fill="none" stroke-width="6"/>
</g>
<path d="M-395 670l10 2 2 8-10 7z"/>
<g fill="none" stroke-width="3.200">
<path d="M210 215L290 177 395 132M172 331H385L397 338 416 340M485 382L520 372 545 360 600 333M520 378L545 373 565 355M570 350l10 38M58 514L78 518 105 530H133L140 523H148L160 552 177 545 188 560 190 585 203 593M210 714L218 706 232 706 229 692H250M250 692L247 716M240 725L258 732 290 728M224 741L236 725M258 732L252 748M262 770L285 775M392 772L386 800 399 822 425 830 441 832 438 862 448 886M418 975L414 890 440 885 448 900 473 888 466 860 508 850M508 850L518 880 520 893 555 885 590 882M512 807L505 830 514 840 508 850M545 835L537 860 547 885M575 838L572 862 578 883M600 858L590 882M325 895L360 910 358 935 312 957M360 910L395 938 415 940M420 670l2 20"/>
</g>
<g fill="none" stroke-width="5" stroke-linecap="round">
<path d="M-210 302L-150 297" stroke-dasharray="10 8"/><path d="M-138 294L-60 273" stroke-dasharray="14 6"/><path d="M-60 273L8 256" stroke-width="6"/><path d="M40 242l40 3M120 226l30-9M150 217l28-8" stroke-dasharray="5 5"/>
<path d="M228 222l-18 18 8 5-20 15 10 4-22 10 6 12-15 5 2 15M154 320l12 16-12 11M216 228l-8 14" stroke-width="7"/>
<path d="M232 122l18-2M85 190l5-1M-46 250l-4 3M0 218l5-1M35 222l8-1M63 206h8"/>
<path d="M383 585l10-1M395 602l4 16M405 617l5 18M423 643l5-2M402 636l12 10M380 602l3 10M468 678l20 2M502 686l8 15 5 18 1 20-6 22-3 14 0 14-12 2M420 758l20 2M480 776l20 2M255 710l20-3" stroke-dasharray="1 8"/>
<path d="M330 671h1M345 667h1M320 643h3M530 518h1M24 555h1M38 678h1M94 645h1M340 608h12M198 912l10 5-4 6M218 918h2M-418 638l8 2M-402 646l12 8M45 505l10 5M35 495l10 3M627 385h1" stroke-width="4.500"/>
<path d="M-481 862h1M-465 886h2M-609 945h3" stroke-width="4"/>
<path d="M447 460l8-2M450 472l6-10M560 260l10-4M497 786l13-4 4 12M485 782h10M600 922l30-1M596 928l15-18"/>
</g>
<g fill="#e2e1dc" stroke="#605b52" stroke-width="3"><path d="M388 352l20-5 18-12h18l4 14-12 8-12-6-20 4zM387 409l4-15 16-14 20-12-13 20-17 14zM438 368l10 4 12-5 8 6-10 12-15 6 2-12zM422 410l12-6 24-8-3 7-18 4zM462 393l13-9 16-1-5 6z"/></g>
<path d="M398 785l5-6 5 9-4 10z" fill="#a6bfde" stroke-width="3"/>
</g>
</svg>
</div>
</main>
</div>
</body>
</html>
```
FILE: styles.css
```css
* { box-sizing: border-box; }
body { margin: 0; background: #efefef; color: #000; font: 12px/16px "Open Sans", "Noto Sans", sans-serif; }
.defs { position: absolute; }
.defs text { letter-spacing: 0; }
svg { display: block; flex: none; }
.app { width: 849px; height: 590px; overflow: hidden; display: flex; flex-direction: column; }

.titlebar { height: 24px; background: #fff; display: flex; align-items: flex-start; gap: 5px; padding: 2px 0 0 6px; color: #8c8c8c; letter-spacing: -.32px; }
.titlebar span { padding-top: 1px; }
.logo { width: 16px; height: 16px; }
.menu { height: 23px; background: #fff; display: grid; grid-template-columns: 53px 36px 41px 44px 58px 55px 49px 48px 64px 40px 64px 73px 1fr; padding: 5px 0 0 6px; color: #828282; letter-spacing: -.3px; white-space: nowrap; }
.menu u { text-underline-offset: 2px; }

.toolrow { height: 34px; flex: none; display: flex; border-bottom: 1px solid #b4b4b4; border-top: 1px solid #fafafa; }
.toolrow:nth-of-type(1) { border-top-color: #e6e6e6; }
.group { display: flex; align-items: center; flex: none; border-right: 1px solid #b4b4b4; padding-right: 1px; }
.group.last { border: 0; }
.handle { width: 9.500px; height: 26px; flex: none; background: radial-gradient(circle, #aaa 1px, transparent 1.300px) 4px 0 / 3px 4px repeat-y; }
.group.first { padding-right: 2px; }
.first .handle { width: 7px; background-position-x: 1px; }
.tool { position: relative; width: 31px; height: 29px; flex: none; display: flex; align-items: center; justify-content: center; border: 1px solid transparent; }
.tool > svg { width: 24px; height: 24px; }
.tool > .corner { position: absolute; right: 2px; bottom: 2px; width: 6px; height: 4px; }
.tool.active { background: #c0dcf2; border-color: #90c8f6; }
.tool.hover { background: #d8e7f3; border-color: #c7dff2; }
.tool.editing { background: #b9b8e5; border-color: #8d9fe2; box-shadow: -4px 0 0 2px #dfc5dd, 0 0 0 2px #dfc5dd; z-index: 1; }
.drop { width: 12px; height: 5px; }
.group.snug { padding-right: 3px; }
.snug .handle { width: 8px; }

.work { flex: 1; min-height: 0; display: flex; padding-top: 1px; }
.docks { width: 344px; flex: none; display: flex; flex-direction: column; padding-right: 4px; }
.dock { display: flex; flex-direction: column; }
.browser { height: 356px; margin-bottom: 5px; }
.docktitle { height: 20px; flex: none; margin: 0; display: flex; align-items: center; border: 1px solid #b8b8b8; border-left: 0; background: #d9d9d9; padding: 0 6px 0 3px; font-size: 12px; font-weight: normal; letter-spacing: -.4px; }
.docktitle span { flex: 1; padding-top: 2px; }
.docktitle svg { width: 10px; height: 10px; margin-left: 11px; }
.docktools { height: 27px; flex: none; display: flex; align-items: center; gap: 7px; padding-left: 3px; }
.docktools svg { width: 16px; height: 16px; }
.docktools .small { width: 8px; height: 5px; margin: 0 -1px 0 -2px; }
.treebox { flex: 1; min-height: 0; display: flex; background: #fff; border: 1px solid #82868f; border-left: 0; overflow: hidden; }
.tree { flex: 1; margin: 0; padding: 0; list-style: none; }
.tree li { height: 20px; display: flex; align-items: center; padding-left: 3px; }
.tree .arrow { width: 11px; height: 10px; margin: -2px 8px 0 0; }
.tree .ico { width: 16px; height: 16px; margin-right: 6px; }
.tree span { letter-spacing: -.38px; white-space: nowrap; padding-top: 3px; }
.tree .l1 { padding-left: 23px; }
.tree .l2 { padding-left: 43px; }
.tree .l3 { width: 204px; margin-left: 79px; padding-left: 3px; }
.tree .picked { background: #d9d9d9; }
.scroll { width: 16px; background: #f0f0f0; display: flex; flex-direction: column; align-items: center; padding: 4px 0; }
.scroll svg { width: 10px; height: 10px; }
.scroll .up { transform: rotate(180deg); }
.thumb { width: 15px; height: 95px; margin: 3px 0 auto; background: #cdcdcd; }

.layers { height: 90px; }
.layerbox { position: relative; height: 50px; flex: none; background: #fff; border: 1px solid #82868f; border-left: 0; }
.layer { height: 20px; display: flex; align-items: center; margin-left: 19px; padding-left: 3px; font-weight: bold; letter-spacing: -.4px; }
.layer span { padding-top: 2px; }
.layer.current { background: #d9d9d9; text-decoration: underline; letter-spacing: -.3px; }
.check { width: 13px; height: 13px; margin-right: 6px; }
.swatch { width: 16px; height: 16px; margin-right: 6px; }
.marker { position: absolute; left: 9px; top: -6px; width: 201px; height: 28px; background: rgba(188, 96, 186, .25); }

.canvas { flex: 1; background: #e0e0e0; border-left: 1px solid #777a82; border-top: 1px solid #777a82; overflow: hidden; }
```
